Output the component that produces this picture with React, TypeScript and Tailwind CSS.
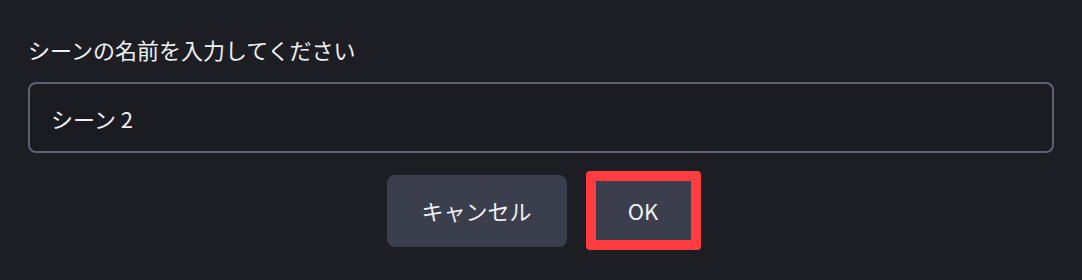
export default function App() {
  return (
    <div
      className="flex h-[280px] w-full flex-col bg-[#1d1e24] px-[28px] pt-[34px] text-[#f0f0f3]"
      style={{ fontFamily: '"Noto Sans CJK JP", "Noto Sans", sans-serif' }}
    >
      {/* Prompt label */}
      <label className="text-[22px] leading-[30px]">シーンの名前を入力してください</label>

      {/* Name input */}
      <input
        defaultValue="シーン 2"
        className="mt-[18px] h-[71px] w-full rounded-[8px] border-2 border-[#5d6076] bg-[#1b1c22] px-[21px] text-[22px] text-[#f0f0f3] outline-none"
      />

      {/* Actions */}
      <div className="mt-[18px] flex items-center justify-center gap-[19px] pl-[5px]">
        <button className="h-[72px] w-[180px] rounded-[8px] bg-[#3b3e4c] text-[22px] text-[#f0f0f3]">
          キャンセル
        </button>
        <button className="h-[79px] w-[115px] rounded-[4px] border-[10px] border-[#ff3d40] bg-[#3b3e4c] text-[22px] text-[#f0f0f3]">
          OK
        </button>
      </div>
    </div>
  );
}
